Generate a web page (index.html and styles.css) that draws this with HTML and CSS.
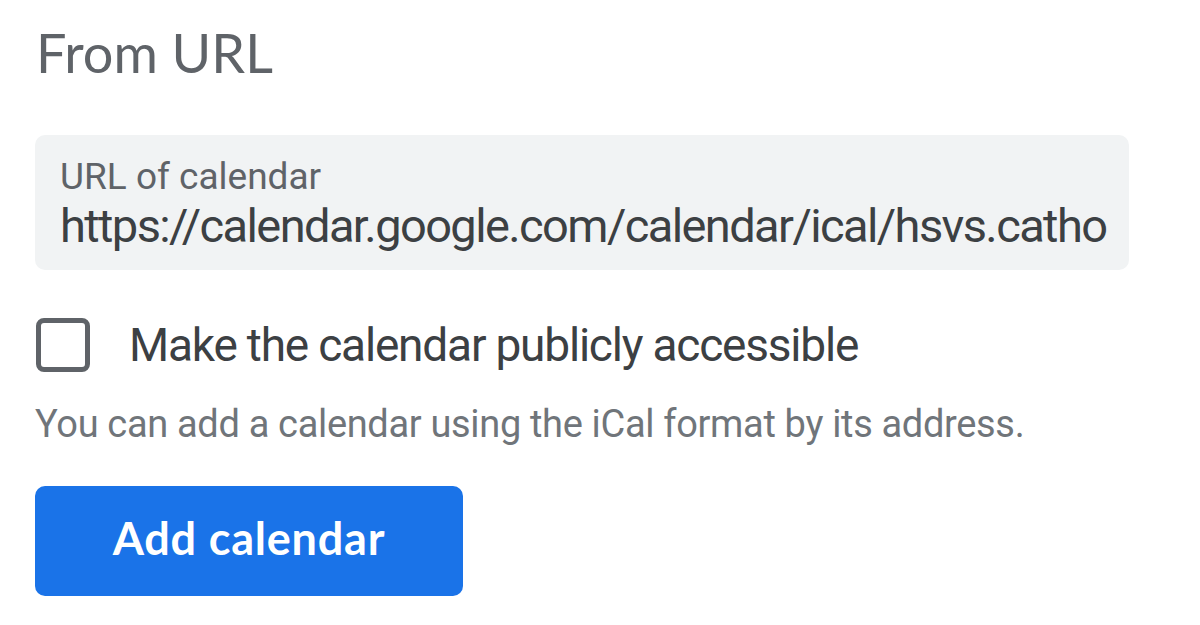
FILE: index.html
```html
<!DOCTYPE html>
<html lang="en">
<head>
    <meta charset="UTF-8">
    <meta name="viewport" content="width=device-width, initial-scale=1.0">
    <title>From URL</title>
    <link rel="stylesheet" href="styles.css">
</head>
<body>
    <div class="panel">
        <h2 class="title">From URL</h2>

        <div class="field">
            <label class="field-label" for="url">URL of calendar</label>
            <div class="field-value" id="url">https://calendar.google.com/calendar/ical/hsvs.catho</div>
        </div>

        <label class="check-row">
            <span class="checkbox"></span>
            <span class="check-text">Make the calendar publicly accessible</span>
        </label>

        <p class="hint">You can add a calendar using the iCal format by its address.</p>

        <button class="add-btn">Add calendar</button>
    </div>
</body>
</html>
```

FILE: styles.css
```css
* {
    margin: 0;
    padding: 0;
    box-sizing: border-box;
}
body {
    background: #fff;
    font-family: Roboto, Arial, sans-serif;
    color: #3c4043;
}
.panel {
    width: 1129px;
    padding: 20px 0 0 35px;
    display: flex;
    flex-direction: column;
    align-items: flex-start;
}
.title {
    font-family: Lato, "Open Sans", sans-serif;
    font-weight: 400;
    font-size: 54px;
    line-height: 66px;
    color: #5f6368;
    margin-left: 1px;
}
.field {
    margin-top: 49px;
    width: 1094px;
    height: 135px;
    background: #f1f3f4;
    border-radius: 10px;
    padding: 21px 20px 0 25px;
    overflow: hidden;
}
.field-label {
    display: block;
    font-size: 37px;
    line-height: 42px;
    color: #5f6368;
}
.field-value {
    font-size: 47px;
    line-height: 56px;
    letter-spacing: -1.6px;
    color: #3c4043;
    white-space: nowrap;
}
.check-row {
    margin-top: 48px;
    display: flex;
    align-items: center;
    gap: 39px;
}
.checkbox {
    width: 54px;
    height: 54px;
    border: 5px solid #5f6368;
    border-radius: 8px;
    margin-left: 1px;
}
.check-text {
    font-size: 46px;
    line-height: 54px;
    letter-spacing: -1.2px;
    color: #3c4043;
}
.hint {
    margin-top: 28px;
    font-size: 38px;
    line-height: 48px;
    letter-spacing: -0.33px;
    color: #70757a;
}
.add-btn {
    margin-top: 38px;
    width: 428px;
    height: 110px;
    padding-bottom: 6px;
    border: none;
    border-radius: 10px;
    background: #1a73e8;
    color: #fff;
    font-family: Lato, "Open Sans", sans-serif;
    font-weight: 700;
    font-size: 45px;
    letter-spacing: 0.8px;
}
```
